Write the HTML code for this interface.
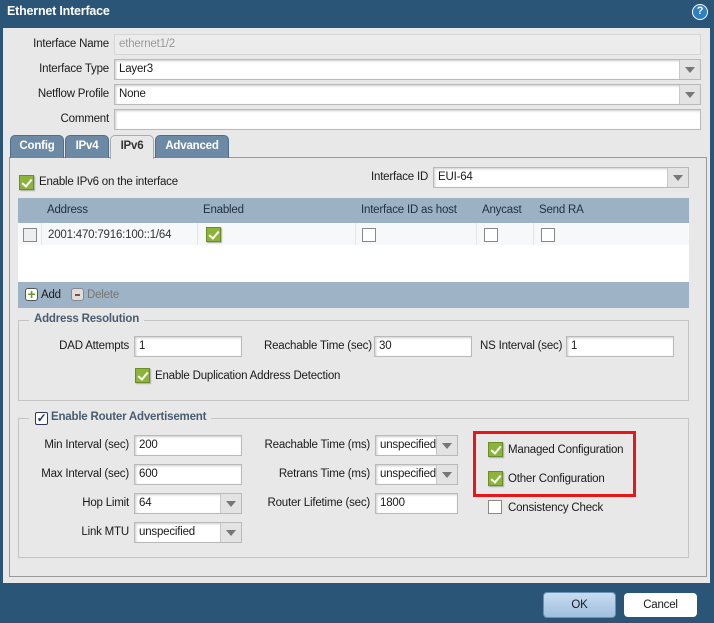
<!DOCTYPE html>
<html><head><meta charset="utf-8"><style>
*{box-sizing:border-box;margin:0;padding:0}
body{width:714px;height:623px;background:#2b5577;font-family:"Liberation Sans",sans-serif;font-size:11.5px;letter-spacing:-0.2px;color:#1a1a1a;position:relative;overflow:hidden}
.a{position:absolute}
.title{left:7px;top:4px;color:#fff;font-weight:bold;font-size:12.5px}
.help{left:692px;top:4px;width:16px;height:16px;border-radius:50%;background:#2f7fc4;border:1.5px solid #fff;color:#fff;font-weight:bold;font-size:11px;text-align:center;line-height:13px}
.panel{left:3px;top:28px;width:707px;height:555px;background:#e8e8e9}
.lbl{text-align:right;white-space:nowrap}
.inp{background:#fff;border:1px solid #b9b9b9;box-shadow:inset 1px 1px 2px #ccc;height:21px;padding:3px 4px;white-space:nowrap;overflow:hidden}
.arr{position:absolute;right:0;top:0;width:21px;height:19px;background:#e3e3e3;border-left:1px solid #c8c8c8}
.arr:after{content:"";position:absolute;left:5px;top:7px;border-left:5px solid transparent;border-right:5px solid transparent;border-top:6px solid #777}
.tab{top:135px;height:23px;background:#6c8aa6;border:1px solid #4f6e8b;border-bottom:none;border-radius:5px 5px 0 0;color:#fff;font-weight:bold;text-align:center;line-height:21px;font-size:11.5px}
.cb{width:14px;height:14px;border:1px solid #888;background:#fff}
.cbg{width:15px;height:15px;background:#8db43a;border:1px solid #6a8d25;box-shadow:1px 1px 1px #aaa}
.cbg:after{content:"";position:absolute;left:4px;top:1px;width:4px;height:8px;border:solid #fff;border-width:0 2.5px 2.5px 0;transform:rotate(40deg)}
.fs{border:1px solid #c4c4c4}
.leg{background:#e8e8e9;color:#4a5d70;font-weight:bold;padding:0 5px}
.th{top:198px;height:25px;background:#9db1c5;border-right:1px solid #d0dae4;padding:6px 6px;color:#1f2f3f}
.td{top:223px;height:22px;border-right:1px solid #e3e6ea}
</style></head><body>
<div class="a title">Ethernet Interface</div>
<div class="a help">?</div>
<div class="a panel"></div>

<div class="a lbl" style="left:20px;width:89px;top:38px">Interface Name</div>
<div class="a inp" style="left:114px;top:34px;width:587px;background:#ececec;color:#999;box-shadow:none;border-color:#d5d5d5">ethernet1/2</div>
<div class="a lbl" style="left:20px;width:89px;top:63px">Interface Type</div>
<div class="a inp" style="left:114px;top:59px;width:587px">Layer3<span class="arr"></span></div>
<div class="a lbl" style="left:20px;width:89px;top:88px">Netflow Profile</div>
<div class="a inp" style="left:114px;top:84px;width:587px">None<span class="arr"></span></div>
<div class="a lbl" style="left:20px;width:89px;top:113px">Comment</div>
<div class="a inp" style="left:114px;top:109px;width:587px"></div>

<div class="a" style="left:9px;top:157px;width:698px;height:420px;border:1px solid #999;background:#e8e8e9"></div>
<div class="a tab" style="left:10px;width:54px">Config</div>
<div class="a tab" style="left:65px;width:44px">IPv4</div>
<div class="a tab" style="left:110px;width:44px;background:#e8e8e9;color:#333;border-color:#aaa;height:24px">IPv6</div>
<div class="a tab" style="left:155px;width:74px">Advanced</div>

<div class="a cbg" style="left:19px;top:175px"></div>
<div class="a" style="left:39px;top:176px">Enable IPv6 on the interface</div>
<div class="a" style="left:371px;top:171px">Interface ID</div>
<div class="a inp" style="left:433px;top:167px;width:256px">EUI-64<span class="arr"></span></div>

<div class="a" style="left:18px;top:198px;width:671px;height:110px;background:#fff;border:1px solid #9db1c5"></div>
<div class="a th" style="left:18px;width:24px"></div>
<div class="a th" style="left:41px;width:157px">Address</div>
<div class="a th" style="left:197px;width:159px">Enabled</div>
<div class="a th" style="left:355px;width:122px">Interface ID as host</div>
<div class="a th" style="left:476px;width:58px">Anycast</div>
<div class="a th" style="left:533px;width:156px;border-right:none">Send RA</div>
<div class="a" style="left:18px;top:223px;width:671px;height:59px;background:#f7f8fa"></div>
<div class="a" style="left:18px;top:245px;width:671px;height:37px;background:#fff"></div>
<div class="a td" style="left:18px;width:24px"></div>
<div class="a td" style="left:41px;width:157px"></div>
<div class="a td" style="left:197px;width:159px"></div>
<div class="a td" style="left:355px;width:122px"></div>
<div class="a td" style="left:476px;width:58px"></div>
<div class="a cb" style="left:23px;top:228px;background:#eee"></div>
<div class="a" style="left:48px;top:229px;color:#333">2001:470:7916:100::1/64</div>
<div class="a cbg" style="left:206px;top:227px"></div>
<div class="a cb" style="left:362px;top:228px"></div>
<div class="a cb" style="left:484px;top:228px"></div>
<div class="a cb" style="left:541px;top:228px"></div>
<div class="a" style="left:18px;top:282px;width:671px;height:26px;background:#9fb3c6"></div>
<div class="a" style="left:25px;top:288px;width:13px;height:13px;border:1px solid #555;border-radius:3px;background:#fff;color:#6a9a1a;font-weight:bold;font-size:14px;line-height:10px;text-align:center">+</div>
<div class="a" style="left:41px;top:289px">Add</div>
<div class="a" style="left:71px;top:288px;width:13px;height:13px;border:1px solid #888;border-radius:3px;background:#ddd"><div class="a" style="left:3px;top:5px;width:5px;height:2px;background:#944"></div></div>
<div class="a" style="left:87px;top:289px;color:#777">Delete</div>

<div class="a fs" style="left:18px;top:320px;width:671px;height:81px"></div>
<div class="a leg" style="left:29px;top:313px">Address Resolution</div>
<div class="a lbl" style="left:40px;width:89px;top:340px">DAD Attempts</div>
<div class="a inp" style="left:134px;top:336px;width:108px">1</div>
<div class="a" style="left:264px;top:340px">Reachable Time (sec)</div>
<div class="a inp" style="left:374px;top:336px;width:98px">30</div>
<div class="a" style="left:480px;top:340px">NS Interval (sec)</div>
<div class="a inp" style="left:566px;top:336px;width:108px">1</div>
<div class="a cbg" style="left:135px;top:368px"></div>
<div class="a" style="left:155px;top:370px">Enable Duplication Address Detection</div>

<div class="a fs" style="left:18px;top:418px;width:671px;height:140px"></div>
<div class="a leg" style="left:29px;top:411px;padding-left:22px">Enable Router Advertisement</div>
<div class="a" style="left:35px;top:412px;width:13px;height:13px;border:1px solid #335;border-radius:2px;background:#fff;color:#1a3a7a;font-size:12px;line-height:11px;text-align:center;font-weight:bold">✓</div>

<div class="a lbl" style="left:20px;width:109px;top:439px">Min Interval (sec)</div>
<div class="a inp" style="left:134px;top:435px;width:108px">200</div>
<div class="a lbl" style="left:20px;width:109px;top:468px">Max Interval (sec)</div>
<div class="a inp" style="left:134px;top:464px;width:108px">600</div>
<div class="a lbl" style="left:20px;width:109px;top:497px">Hop Limit</div>
<div class="a inp" style="left:134px;top:493px;width:108px">64<span class="arr"></span></div>
<div class="a lbl" style="left:20px;width:109px;top:526px">Link MTU</div>
<div class="a inp" style="left:134px;top:522px;width:108px">unspecified<span class="arr"></span></div>

<div class="a lbl" style="left:250px;width:120px;top:439px">Reachable Time (ms)</div>
<div class="a inp" style="left:375px;top:435px;width:83px;padding-right:22px">unspecified<span class="arr"></span></div>
<div class="a lbl" style="left:250px;width:120px;top:468px">Retrans Time (ms)</div>
<div class="a inp" style="left:375px;top:464px;width:83px;padding-right:22px">unspecified<span class="arr"></span></div>
<div class="a lbl" style="left:250px;width:120px;top:497px">Router Lifetime (sec)</div>
<div class="a inp" style="left:375px;top:493px;width:83px">1800</div>

<div class="a" style="left:473px;top:431px;width:163px;height:66px;border:3px solid #e8161b"></div>
<div class="a cbg" style="left:488px;top:442px"></div>
<div class="a" style="left:508px;top:444px">Managed Configuration</div>
<div class="a cbg" style="left:488px;top:471px"></div>
<div class="a" style="left:508px;top:473px">Other Configuration</div>
<div class="a cb" style="left:488px;top:500px"></div>
<div class="a" style="left:508px;top:502px">Consistency Check</div>

<div class="a" style="left:543px;top:592px;width:73px;height:26px;border:1px solid #6a8fb4;border-radius:4px;background:linear-gradient(#c8dcef,#9fbfdf);text-align:center;line-height:24px">OK</div>
<div class="a" style="left:624px;top:593px;width:73px;height:24px;border-radius:4px;background:#fff;text-align:center;line-height:24px">Cancel</div>
</body></html>
